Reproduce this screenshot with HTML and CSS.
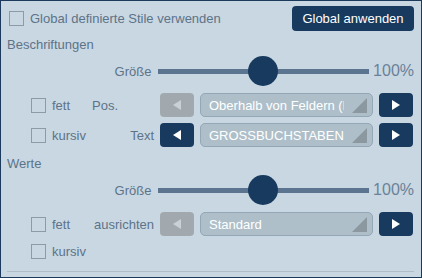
FILE: index.html
```html
<!DOCTYPE html>
<html>
<head>
  <meta charset="UTF-8">
  <title>Stile</title>
  <link rel="stylesheet" href="styles.css">
</head>
<body>
  <div class="panel">
    <div class="top-row">
      <span class="check"></span>
      <span class="check-label">Global definierte Stile verwenden</span>
      <button class="apply">Global anwenden</button>
    </div>

    <div class="section">Beschriftungen</div>

    <div class="slider-row">
      <span class="slider-label">Größe</span>
      <div class="track"><span class="thumb"></span></div>
      <span class="value">100%</span>
    </div>

    <div class="opt-row">
      <span class="check"></span>
      <span class="opt-label">fett</span>
      <span class="field-label left">Pos.</span>
      <button class="arrow off"><svg width="8" height="10" viewBox="0 0 8 10"><polygon points="8,0 8,10 0,5"/></svg></button>
      <div class="dropdown"><span class="dd-text">Oberhalb von Feldern (links)</span><span class="dd-corner"></span></div>
      <button class="arrow"><svg width="8" height="10" viewBox="0 0 8 10"><polygon points="0,0 0,10 8,5"/></svg></button>
    </div>

    <div class="opt-row">
      <span class="check"></span>
      <span class="opt-label">kursiv</span>
      <span class="field-label">Text</span>
      <button class="arrow"><svg width="8" height="10" viewBox="0 0 8 10"><polygon points="8,0 8,10 0,5"/></svg></button>
      <div class="dropdown"><span class="dd-text">GROSSBUCHSTABEN</span><span class="dd-corner"></span></div>
      <button class="arrow"><svg width="8" height="10" viewBox="0 0 8 10"><polygon points="0,0 0,10 8,5"/></svg></button>
    </div>

    <div class="section werte">Werte</div>

    <div class="slider-row">
      <span class="slider-label">Größe</span>
      <div class="track"><span class="thumb"></span></div>
      <span class="value">100%</span>
    </div>

    <div class="opt-row align">
      <span class="check"></span>
      <span class="opt-label">fett</span>
      <span class="field-label">ausrichten</span>
      <button class="arrow off"><svg width="8" height="10" viewBox="0 0 8 10"><polygon points="8,0 8,10 0,5"/></svg></button>
      <div class="dropdown"><span class="dd-text">Standard</span><span class="dd-corner"></span></div>
      <button class="arrow"><svg width="8" height="10" viewBox="0 0 8 10"><polygon points="0,0 0,10 8,5"/></svg></button>
    </div>

    <div class="last-row">
      <span class="check"></span>
      <span class="opt-label">kursiv</span>
    </div>

    <div class="footer"></div>
  </div>
</body>
</html>
```

FILE: styles.css
```css
body {
  margin: 0;
  background-color: #ffffff;
  font-family: "Liberation Sans", Arial, sans-serif;
  font-size: 13px;
}

.panel {
  width: 422px;
  height: 278px;
  box-sizing: border-box;
  border: 1px solid #1b3a5c;
  background-color: #c9d7e2;
  padding: 0 7px 0 6px;
  color: #5c7389;
}

.check {
  display: inline-block;
  width: 15px;
  height: 15px;
  box-sizing: border-box;
  border: 1px solid #8c9ba7;
  flex: none;
}

.top-row {
  display: flex;
  align-items: center;
  height: 25px;
  margin-top: 5px;
}

.top-row .check {
  margin-left: 2px;
  margin-right: 6px;
}

.check-label {
  flex: 1;
}

.apply {
  width: 122px;
  height: 25px;
  border: none;
  border-radius: 4px;
  background-color: #173a5e;
  color: #ffffff;
  font-family: inherit;
  font-size: 13px;
  padding: 0;
}

.section {
  height: 16px;
  line-height: 16px;
  margin-top: 6px;
}

.werte {
  margin-top: 9px;
}

.slider-row {
  display: flex;
  align-items: center;
  height: 30px;
  margin-top: 3px;
}

.slider-label {
  width: 146px;
  text-align: right;
  margin-right: 7px;
}

.track {
  width: 212px;
  height: 5px;
  background-color: #5b7590;
  display: flex;
  align-items: center;
  padding-left: 90px;
  box-sizing: border-box;
}

.thumb {
  width: 30px;
  height: 30px;
  border-radius: 50%;
  background-color: #173a5e;
  flex: none;
}

.value {
  margin-left: 4px;
  font-size: 16px;
  color: #6a8298;
}

.opt-row {
  display: flex;
  align-items: center;
  height: 24px;
  margin-top: 6px;
}

.slider-row + .opt-row {
  margin-top: 7px;
}

.opt-row .check,
.last-row .check {
  margin-left: 24px;
  margin-right: 6px;
}

.opt-label {
  width: 40px;
}

.field-label {
  width: 62px;
  text-align: right;
  margin-right: 6px;
}

.field-label.left {
  text-align: left;
}

.arrow {
  width: 34px;
  height: 24px;
  border: none;
  border-radius: 4px;
  background-color: #173a5e;
  padding: 0;
  display: flex;
  align-items: center;
  justify-content: center;
  flex: none;
}

.arrow svg {
  fill: #ffffff;
}

.arrow.off {
  background-color: #a1a9ae;
}

.arrow.off svg {
  fill: #c9d1d7;
}

.dropdown {
  width: 173px;
  height: 24px;
  box-sizing: border-box;
  margin: 0 6px;
  border: 1px solid #94a7b4;
  border-radius: 5px;
  background-color: #aebfca;
  display: flex;
  align-items: center;
  padding: 0 5px 0 8px;
}

.dd-text {
  flex: 1;
  overflow: hidden;
  white-space: nowrap;
  color: #ffffff;
}

.dd-corner {
  width: 0;
  height: 0;
  border-left: 15px solid transparent;
  border-bottom: 15px solid #8b989f;
  align-self: flex-end;
  margin: 0 0 3px 8px;
  flex: none;
}

.last-row {
  display: flex;
  align-items: center;
  height: 16px;
  margin-top: 7px;
}

.footer {
  margin-top: 12px;
  border-top: 1px solid #afbdc8;
}
```
